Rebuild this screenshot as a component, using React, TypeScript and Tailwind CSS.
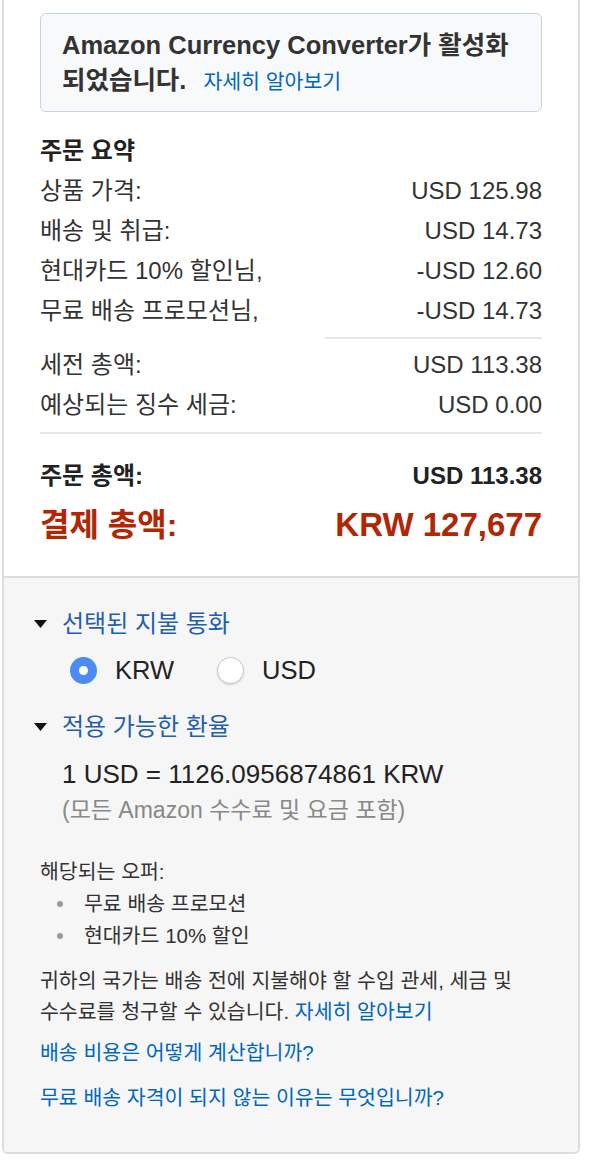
import React from 'react';

const font = { fontFamily: '"Liberation Sans", Arial, "Noto Sans CJK KR", sans-serif' };

function Row({ label, value, bold }: { label: string; value: string; bold?: boolean }) {
  return (
    <div className={`flex h-[40px] items-center justify-between text-[24px] ${bold ? 'font-bold text-[#222]' : 'text-[#333]'}`}>
      <span>{label}</span>
      <span>{value}</span>
    </div>
  );
}

function Caret() {
  return (
    <svg width="13" height="8" viewBox="0 0 13 8" className="-ml-[6px] mr-[15px] shrink-0">
      <path d="M0 0 L13 0 L6.5 8 Z" fill="#111" />
    </svg>
  );
}

export default function App() {
  return (
    <div className="min-h-screen bg-white" style={font}>
      <div className="ml-[2px] w-[578px] rounded-b-[6px] border-x-2 border-b-2 border-[#dddddd]">
        {/* summary */}
        <div className="px-[36px] pb-[26px] pt-[13px]">
          <div className="rounded-[6px] border border-[#c3d4e4] bg-[#f8f9fb] pb-[12px] pl-[21px] pr-[12px] pt-[14px] text-[25.5px] leading-[35px]">
            <div className="whitespace-nowrap font-bold text-[#333]">
              Amazon Currency Converter가 활성화
            </div>
            <div>
              <span className="font-bold text-[#333]">되었습니다.</span>
              <span className="ml-[17px] text-[20.5px] text-[#0066c0]">자세히 알아보기</span>
            </div>
          </div>

          <div className="mt-[21px] h-[36px] text-[24px] font-bold leading-[36px] text-[#222]">주문 요약</div>
          <div className="mt-[2px]">
            <Row label="상품 가격:" value="USD 125.98" />
            <Row label="배송 및 취급:" value="USD 14.73" />
            <Row label="현대카드 10% 할인님," value="-USD 12.60" />
            <Row label="무료 배송 프로모션님," value="-USD 14.73" />
          </div>
          <div className="mt-[6px] flex justify-end">
            <div className="h-[2px] w-[217px] bg-[#e7e7e7]" />
          </div>
          <div className="mt-[6px]">
            <Row label="세전 총액:" value="USD 113.38" />
            <Row label="예상되는 징수 세금:" value="USD 0.00" />
          </div>
          <div className="mt-[7px] h-[2px] bg-[#e7e7e7]" />
          <div className="mt-[22px]">
            <Row label="주문 총액:" value="USD 113.38" bold />
          </div>
          <div className="mt-[4px] flex h-[50px] items-center justify-between font-bold text-[#b12704]">
            <span className="text-[32px]">결제 총액:</span>
            <span className="text-[33px]">KRW 127,677</span>
          </div>
        </div>

        {/* currency options */}
        <div className="rounded-b-[6px] border-t-2 border-[#dddddd] bg-[#f6f6f6] px-[36px] pb-[38px] pt-[28px]">
          <div className="flex h-[36px] items-center text-[24px] text-[#1f5fae]">
            <Caret />
            <span>선택된 지불 통화</span>
          </div>
          <div className="ml-[30px] mt-[8px] flex h-[40px] items-center text-[25.5px] text-[#222]">
            <span className="flex h-[27px] w-[27px] items-center justify-center rounded-full bg-[#4c8cf2]">
              <span className="h-[9px] w-[9px] rounded-full bg-white" />
            </span>
            <span className="ml-[18px]">KRW</span>
            <span className="ml-[43px] h-[27px] w-[27px] rounded-full border border-[#c8c8c8] bg-white shadow-[0_1px_2px_rgba(0,0,0,0.15)]" />
            <span className="ml-[18px]">USD</span>
          </div>

          <div className="mt-[19px] flex h-[36px] items-center text-[24px] text-[#1f5fae]">
            <Caret />
            <span>적용 가능한 환율</span>
          </div>
          <div className="mt-[11px] h-[36px] pl-[22px] text-[26px] leading-[36px] text-[#222]">
            1 USD = 1126.0956874861 KRW
          </div>
          <div className="h-[36px] pl-[22px] text-[23px] leading-[36px] text-[#888]">
            (모든 Amazon 수수료 및 요금 포함)
          </div>

          <div className="mt-[28px] h-[32px] text-[20.5px] leading-[32px] text-[#333]">해당되는 오퍼:</div>
          <ul className="text-[20.5px] text-[#333]">
            <li className="flex h-[32px] items-center">
              <span className="ml-[17px] mr-[21px] h-[6px] w-[6px] rounded-full bg-[#999]" />
              무료 배송 프로모션
            </li>
            <li className="flex h-[32px] items-center">
              <span className="ml-[17px] mr-[21px] h-[6px] w-[6px] rounded-full bg-[#999]" />
              현대카드 10% 할인
            </li>
          </ul>

          <p className="mt-[13px] break-keep text-[20.5px] leading-[31px] text-[#333]">
            귀하의 국가는 배송 전에 지불해야 할 수입 관세, 세금 및 수수료를 청구할 수 있습니다.{' '}
            <span className="text-[#0066c0]">자세히 알아보기</span>
          </p>
          <div className="mt-[10px] h-[32px] text-[20.5px] leading-[32px] text-[#0066c0]">배송 비용은 어떻게 계산합니까?</div>
          <div className="mt-[13px] h-[32px] text-[20.5px] leading-[32px] text-[#0066c0]">무료 배송 자격이 되지 않는 이유는 무엇입니까?</div>
        </div>
      </div>
    </div>
  );
}
